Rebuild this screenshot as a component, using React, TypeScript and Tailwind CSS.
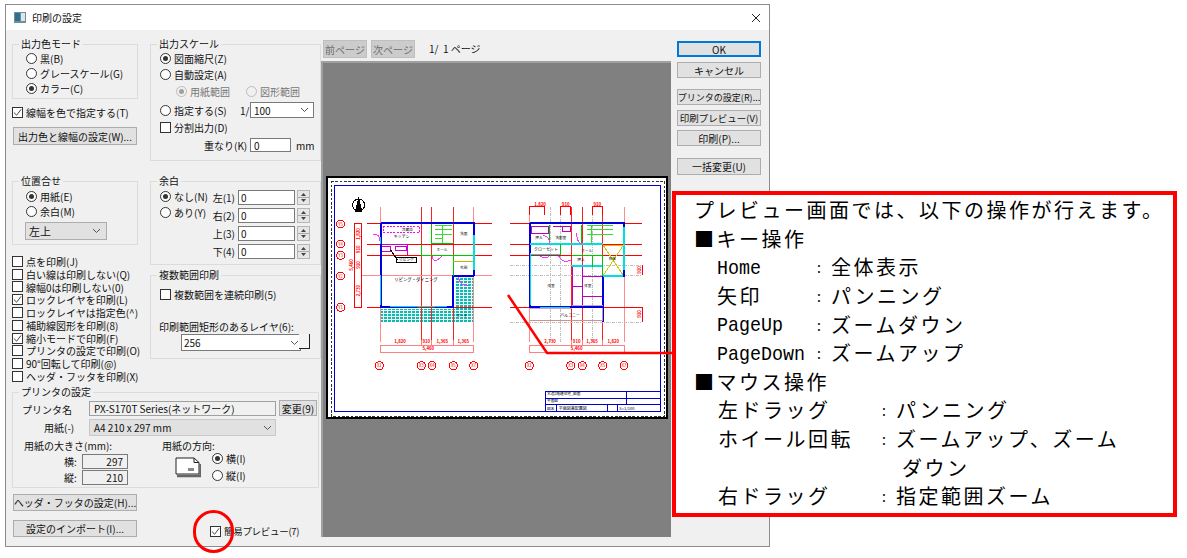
import { ReactNode } from "react";

const Radio = ({ on, off }: { on?: boolean; off?: boolean }) => (
  <span
    className={`flex h-[11px] w-[11px] shrink-0 items-center justify-center rounded-full border ${off ? "border-[#bcbcbc] bg-[#f0f0f0]" : "border-[#333333] bg-white"}`}
  >
    {on && <span className={`h-[5px] w-[5px] rounded-full ${off ? "bg-[#a0a0a0]" : "bg-[#333333]"}`} />}
  </span>
);

const Check = ({ on }: { on?: boolean }) => (
  <span className="flex h-[11px] w-[11px] shrink-0 items-center justify-center border border-[#333333] bg-white">
    {on && (
      <svg width="9" height="9" viewBox="0 0 10 10">
        <path d="M1 5 L4 8 L9 1.5" fill="none" stroke="#444444" strokeWidth="1.1" />
      </svg>
    )}
  </span>
);

const RadioRow = ({ on, off, children, className = "" }: { on?: boolean; off?: boolean; children: ReactNode; className?: string }) => (
  <div className={`flex items-center gap-[3px] whitespace-nowrap ${off ? "text-[#777777]" : ""} ${className}`}>
    <Radio on={on} off={off} />
    <span>{children}</span>
  </div>
);

const CheckRow = ({ on, children, className = "" }: { on?: boolean; children: ReactNode; className?: string }) => (
  <div className={`flex items-center gap-[3px] whitespace-nowrap ${className}`}>
    <Check on={on} />
    <span>{children}</span>
  </div>
);

const Group = ({ title, className, children }: { title: string; className: string; children: ReactNode }) => (
  <div className={`relative border border-[#dcdcdc] ${className}`}>
    <span className="absolute -top-[7px] left-[6px] bg-[#f0f0f0] px-[2px] leading-[12px] whitespace-nowrap">{title}</span>
    {children}
  </div>
);

const Btn = ({ children, focus, className = "" }: { children: ReactNode; focus?: boolean; className?: string }) => (
  <div
    className={`flex items-center justify-center bg-[#e1e1e1] whitespace-nowrap ${focus ? "border-2 border-[#0078d7]" : "border border-[#adadad]"} ${className}`}
  >
    {children}
  </div>
);

const Chevron = () => (
  <svg width="9" height="6" viewBox="0 0 9 6" className="shrink-0">
    <path d="M1 1 L4.5 4.5 L8 1" fill="none" stroke="#555555" strokeWidth="1" />
  </svg>
);

const Spin = () => (
  <div className="ml-[2px] flex h-[15px] w-[13px] flex-col border border-[#b5b5b5] bg-[#e6e6e6]">
    <svg width="11" height="13" viewBox="0 0 11 13">
      <path d="M5.5 2 L8 5 H3 Z M3 8 H8 L5.5 11 Z" fill="#444444" />
      <path d="M0 6.5 H11" stroke="#aaaaaa" />
    </svg>
  </div>
);

const MarginRow = ({ label }: { label: string }) => (
  <div className="flex h-[18px] items-center justify-end">
    <span className="mr-[3px]">{label}</span>
    <div className="flex h-[15px] w-[57px] items-center border border-[#7a7a7a] bg-white pl-[2px]">0</div>
    <Spin />
  </div>
);

const Hatch = ({ x, y, w, h }: { x: number; y: number; w: number; h: number }) => (
  <rect x={x} y={y} width={w} height={h} fill="url(#hatch)" />
);

const Bubble = ({ x, y, t }: { x: number; y: number; t: string }) => (
  <g>
    <circle cx={x} cy={y} r="12" fill="white" stroke="#ff0000" strokeWidth="3" />
    <text x={x} y={y + 5} fontSize="13" textAnchor="middle" fill="#ff0000">{t}</text>
  </g>
);

const Dim = ({ x, y, t, rot }: { x: number; y: number; t: string; rot?: boolean }) => (
  <text
    x={x}
    y={y}
    fontSize="13"
    fontWeight="700"
    textAnchor="middle"
    fill="#ff0000"
    transform={rot ? `rotate(-90 ${x} ${y})` : undefined}
  >
    {t}
  </text>
);

const Room = ({ x, y, t, size = 13 }: { x: number; y: number; t: string; size?: number }) => (
  <text x={x} y={y} fontSize={size} textAnchor="middle" fill="#000000">{t}</text>
);

const polyline = (d: string, color: string, w = 3, dash?: string) => (
  <path d={d} fill="none" stroke={color} strokeWidth={w} strokeDasharray={dash} />
);

// the drawing is plotted in 3x units of the screen so it stays easy to read off
const Plan = () => (
  <svg width="342" height="243" viewBox="18 18 1026 729" shapeRendering="crispEdges" className="block bg-white">
    <defs>
      <pattern id="hatch" width="12" height="9" patternUnits="userSpaceOnUse">
        <rect width="12" height="9" fill="#12b8b0" />
        <path d="M0 8 H12 M11 0 V9" stroke="#e8fbfa" strokeWidth="3" />
      </pattern>
    </defs>
    <rect x="20" y="20" width="1022" height="725" fill="none" stroke="#000000" strokeWidth="6" />
    <rect x="33" y="33" width="1000" height="706" fill="none" stroke="#333333" strokeWidth="3" strokeDasharray="8 5" />
    <rect x="44" y="46" width="978" height="679" fill="none" stroke="#0000cc" strokeWidth="3" />

    {/* north mark */}
    <circle cx="116" cy="105" r="18" fill="white" stroke="#000000" strokeWidth="3" />
    <path d="M116 78 L127 125 H105 Z" fill="#000000" />

    {/* left floor */}
    <Hatch x={180} y={416} w={282} h={41} />
    <Hatch x={404} y={320} w={58} h={96} />
    {[180, 304, 335, 400, 460].map((x) => (
      <path key={x} d={`M${x} 110 V515`} stroke={x === 180 || x === 460 ? "#ff8c8c" : "#ff2020"} strokeWidth="3" />
    ))}
    {[160, 223, 256, 412].map((y) => (
      <path key={y} d={`M140 ${y} H515`} stroke="#ff0000" strokeWidth="3" />
    ))}
    <path d="M124 316 H515" stroke="#ff8c8c" strokeWidth="3" />
    {polyline("M104 160 H124 V412 H104 Z M104 285 V412", "#ff0000", 3)}
    {polyline("M180 525 H460 M180 525 V547 H460 V525 M304 510 V525 M335 510 V525 M400 510 V525", "#ff8080", 3)}
    {polyline("M182 160 H462 V318 M182 160 V412 H290 M345 412 H400 V318 H462", "#0000dd", 6)}
    {polyline("M182 200 V222 M182 315 V405 M210 410 H380 M462 195 V300", "#00e0e0", 4)}
    {polyline("M304 225 V256 H460 M335 165 V220 H400 M400 256 V318", "#00c800", 3)}
    {polyline("M345 165 H395 M345 178 H395 M345 192 H395 M368 165 V220 M345 205 H368", "#33dd33", 3)}
    {polyline("M190 168 H298 V188 H190 Z", "#ff00ff", 3, "6 4")}
    {polyline("M186 222 H262 V256 M186 228 H212 V244 H186 M226 228 H258 V242 H226 Z", "#cc00cc", 3)}
    {polyline("M160 195 Q180 190 180 212 M336 258 Q340 284 366 258 M415 322 Q420 348 445 348", "#ff33ff", 3)}
    {polyline("M400 274 H460", "#bbbb00", 3)}
    <rect x="230" y="262" width="58" height="14" fill="white" stroke="#000000" strokeWidth="3" />
    {polyline("M212 240 L232 270", "#000000", 3)}
    <Room x={245} y={204} t="キッチン" size={12} />
    <Room x={262} y={182} t="冷蔵庫" size={11} />
    <Room x={259} y={273} t="リビング" size={11} />
    <Room x={288} y={332} t="リビング・ダイニング" size={13} />
    <Room x={366} y={244} t="ホール" size={11} />
    <Room x={431} y={194} t="洗面" size={11} />
    <Room x={431} y={298} t="玄関" size={11} />
    <Room x={426} y={440} t="ポーチ" size={11} />
    <Dim x={240} y={520} t="1,820" />
    <Dim x={319} y={520} t="910" />
    <Dim x={367} y={520} t="1,365" />
    <Dim x={430} y={520} t="1,365" />
    <Dim x={325} y={541} t="5,460" />
    <Dim x={119} y={192} t="1,820" rot />
    <Dim x={119} y={238} t="910" rot />
    <Dim x={119} y={285} t="910" rot />
    <Dim x={119} y={362} t="2,730" rot />
    <Dim x={100} y={285} t="5,460" rot />

    {/* right floor */}
    {[691, 722, 817].map((x) => (
      <path key={x} d={`M${x} 110 V515`} stroke="#c0c0c0" strokeWidth="3" strokeDasharray="10 3 2 3" />
    ))}
    {[628, 755, 787, 848, 913].map((x) => (
      <path key={x} d={`M${x} 110 V515`} stroke={x === 628 || x === 913 ? "#ff8c8c" : "#ff2020"} strokeWidth="3" />
    ))}
    {[160, 223, 256].map((y) => (
      <path key={y} d={`M570 ${y} H965`} stroke="#ff0000" strokeWidth="3" />
    ))}
    <path d="M570 412 H965" stroke="#ff0000" strokeWidth="3" />
    <path d="M570 287 H965 M570 316 H965 M570 456 H965" stroke="#c0c0c0" strokeWidth="3" strokeDasharray="10 3 2 3" />
    {polyline("M628 136 V108 H672 M722 136 V108 H752 M817 136 V108 H848 M672 108 V136 M752 108 V136 M848 108 V136", "#ff0000", 3)}
    {polyline("M628 525 H913 M628 525 V547 H913 V525 M755 510 V525 M787 510 V525 M848 510 V525", "#ff8080", 3)}
    {polyline("M968 285 V316 M968 410 V456", "#ff0000", 3)}
    {polyline("M630 160 H913 V318 H848 V412 H755 M630 160 V412 H755 M848 412 V456", "#0000dd", 6)}
    {polyline("M630 222 H848 M630 254 H722 M755 288 H848 M850 318 H910 M632 250 V405 M912 170 V300 M660 412 H750", "#00e0e0", 4)}
    {polyline("M755 256 H848 V318 M785 165 V222 M816 256 V290 M722 222 V256 M688 165 V222", "#00c800", 3)}
    {polyline("M800 165 H880 M800 178 H880 M800 192 H880 M815 165 V222", "#33dd33", 3)}
    {polyline("M634 168 H686 V190 H634 Z M700 168 H752 V184 H726 V168 M756 292 V405 M756 350 H787 M787 292 V405 H846 M787 320 H846 M787 380 H846 M756 405 H787", "#bb00bb", 3)}
    {polyline("M670 196 Q690 200 688 222 M716 258 Q730 282 752 270 M660 258 Q676 270 688 258 M770 190 Q770 216 785 222", "#ff33ff", 3)}
    {polyline("M850 226 L910 316 M910 226 L850 316 M850 226 H910", "#cccc00", 3)}
    {polyline("M630 414 H755 M755 405 H848", "#c8a8c8", 3)}
    {polyline("M630 452 H848 V415", "#d09090", 4)}
    <Room x={657} y={208} t="押入" size={11} />
    <Room x={722} y={208} t="洗面室" size={11} />
    <Room x={678} y={243} t="クローゼット" size={12} />
    <Room x={800} y={245} t="ホール" size={11} />
    <Room x={783} y={274} t="押入" size={11} />
    <Room x={877} y={271} t="吹抜" size={11} />
    <Room x={693} y={351} t="洋室" size={11} />
    <Room x={803} y={351} t="洋室" size={11} />
    <Room x={750} y={440} t="バルコニー" size={12} />
    <Dim x={660} y={108} t="1,820" />
    <Dim x={737} y={108} t="910" />
    <Dim x={832} y={108} t="910" />
    <Dim x={690} y={520} t="2,730" />
    <Dim x={770} y={520} t="910" />
    <Dim x={816} y={520} t="1,365" />
    <Dim x={880} y={520} t="1,820" />
    <Dim x={770} y={541} t="5,460" />
    <Dim x={964} y={300} t="910" rot />
    <Dim x={964} y={432} t="910" rot />

    {[
      [62, 162, "Y5"],
      [62, 222, "Y4"],
      [62, 256, "Y3"],
      [62, 318, "Y2"],
      [62, 412, "Y1"],
      [178, 587, "X1"],
      [304, 587, "X3"],
      [336, 587, "X4"],
      [400, 587, "X5"],
      [461, 587, "X7"],
      [628, 587, "X1"],
      [752, 587, "X3"],
      [787, 587, "X4"],
      [848, 587, "X5"],
      [912, 587, "X7"],
    ].map(([x, y, t]) => (
      <Bubble key={`${x}-${y}`} x={x as number} y={y as number} t={t as string} />
    ))}

    {/* title block */}
    {polyline("M677 725 V665 H1021 M677 685 H1021 M677 704 H1021 M919 665 V704 M710 704 V725 M862 704 V725 M892 704 V725", "#0000cc", 3)}
    <text x="681" y="675" fontSize="11">木造2階建住宅_図面</text>
    <text x="681" y="697" fontSize="11">平面図</text>
    <text x="681" y="719" fontSize="11">図名</text>
    <text x="716" y="719" fontSize="12">平面図兼配置図</text>
    <text x="898" y="719" fontSize="12">S=1/100</text>
  </svg>
);

const KeyRow = ({ k, v, latin }: { k: string; v: string; latin?: boolean }) => (
  <div className="flex h-[28.6px] items-center whitespace-nowrap pl-[23px]">
    <span className="w-[100px]">
      {latin ? (
        <span className="inline-block origin-left scale-x-[0.873] font-['Liberation_Mono'] text-[21px] tracking-normal">{k}</span>
      ) : (
        k
      )}
    </span>
    <span className="w-[14px] text-[14px]">:</span>
    <span>{v}</span>
  </div>
);

const MouseRow = ({ k, v, indent = "" }: { k: string; v: string; indent?: string }) => (
  <div className="flex h-[28.6px] items-center whitespace-nowrap pl-[24px]">
    <span className="w-[164px]">{k}</span>
    <span className={`w-[14px] text-[14px] ${k || !indent ? "" : "invisible"}`}>:</span>
    <span className={indent}>{v}</span>
  </div>
);

export default function App() {
  return (
    <div className="relative h-[558px] w-[1187px] overflow-hidden bg-white font-['Noto_Sans_CJK_JP','Liberation_Sans',sans-serif] text-[10px] leading-[13px] text-[#111111]">
      {/* dialog */}
      <div className="ml-[5px] mt-[4px] flex h-[543px] w-[765px] flex-col border border-[#8c8c8c] bg-[#f0f0f0]">
        <div className="flex h-[25px] shrink-0 items-center bg-white pl-[8px]">
          <svg width="12" height="11" viewBox="0 0 12 11" className="mr-[6px]">
            <rect width="12" height="11" fill="#6f8ea0" />
            <rect x="1" y="1" width="5" height="8" fill="#2f6f8f" />
            <rect x="7" y="1" width="4" height="8" fill="#dfe6e6" />
          </svg>
          <span>印刷の設定</span>
          <svg width="10" height="10" viewBox="0 0 10 10" className="ml-auto mr-[8px]">
            <path d="M1 1 L9 9 M9 1 L1 9" stroke="#222222" strokeWidth="1" />
          </svg>
        </div>

        <div className="flex min-h-0 flex-1">
          {/* settings */}
          <div className="ml-[6px] flex w-[310px] shrink-0 flex-col pt-[14px]">
            <div className="flex h-[348px] shrink-0">
              <div className="w-[138px] shrink-0">
                <Group title="出力色モード" className="h-[55px] w-[126px] pl-[13px] pt-[6px]">
                  <RadioRow className="h-[15px]">黒(B)</RadioRow>
                  <RadioRow className="h-[15px]">グレースケール(G)</RadioRow>
                  <RadioRow on className="h-[15px]">カラー(C)</RadioRow>
                </Group>
                <CheckRow on className="mt-[7px] h-[13px]">線幅を色で指定する(T)</CheckRow>
                <Btn className="ml-[1px] mt-[8px] h-[18px] w-[124px]">出力色と線幅の設定(W)...</Btn>
                <Group title="位置合せ" className="mt-[36px] h-[64px] w-[126px] pl-[13px] pt-[7px]">
                  <RadioRow on className="h-[15px]">用紙(E)</RadioRow>
                  <RadioRow className="h-[15px]">余白(M)</RadioRow>
                  <div className="-ml-[1px] mt-[3px] flex h-[18px] w-[82px] items-center justify-between border border-[#adadad] bg-[#e1e1e1] pl-[3px] pr-[5px]">
                    <span className="text-[11px]">左上</span>
                    <Chevron />
                  </div>
                </Group>
                <div className="mt-[10px] flex flex-col">
                  <CheckRow className="h-[12.8px]">点を印刷(J)</CheckRow>
                  <CheckRow className="h-[12.8px]">白い線は印刷しない(Q)</CheckRow>
                  <CheckRow className="h-[12.8px]">線幅0は印刷しない(0)</CheckRow>
                  <CheckRow on className="h-[12.8px]">ロックレイヤを印刷(L)</CheckRow>
                  <CheckRow className="h-[12.8px]">ロックレイヤは指定色(^)</CheckRow>
                  <CheckRow className="h-[12.8px]">補助線図形を印刷(8)</CheckRow>
                  <CheckRow on className="h-[12.8px]">縮小モードで印刷(F)</CheckRow>
                  <CheckRow className="h-[12.8px]">プリンタの設定で印刷(O)</CheckRow>
                  <CheckRow className="h-[12.8px]">90°回転して印刷(@)</CheckRow>
                  <CheckRow className="h-[12.8px]">ヘッダ・フッタを印刷(X)</CheckRow>
                </div>
              </div>

              <div className="w-[171px] shrink-0">
                <Group title="出力スケール" className="h-[117px] w-full pl-[9px] pt-[5px]">
                  <RadioRow on className="h-[16px]">図面縮尺(Z)</RadioRow>
                  <RadioRow className="h-[16px]">自動設定(A)</RadioRow>
                  <div className="flex h-[18px] items-center pl-[16px]">
                    <RadioRow on off className="w-[70px]">用紙範囲</RadioRow>
                    <RadioRow off>図形範囲</RadioRow>
                  </div>
                  <div className="flex h-[20px] items-center">
                    <RadioRow className="w-[80px]">指定する(S)</RadioRow>
                    <span className="w-[10px]">1/</span>
                    <div className="flex h-[16px] w-[64px] items-center justify-between border border-[#7a7a7a] bg-white pl-[3px] pr-[4px]">
                      <span>100</span>
                      <Chevron />
                    </div>
                  </div>
                  <CheckRow className="h-[14px]">分割出力(D)</CheckRow>
                  <div className="mt-[4px] flex h-[14px] items-center whitespace-nowrap pl-[44px]">
                    <span className="w-[46px]">重なり(K)</span>
                    <div className="flex h-[14px] w-[41px] items-center border border-[#7a7a7a] bg-white pl-[3px]">0</div>
                    <span className="ml-[5px]">mm</span>
                  </div>
                </Group>
                <Group title="余白" className="mt-[20px] flex h-[84px] w-full pl-[9px] pt-[6px]">
                  <div className="w-[48px]">
                    <RadioRow on className="h-[16px]">なし(N)</RadioRow>
                    <RadioRow className="h-[16px]">あり(Y)</RadioRow>
                  </div>
                  <div className="flex w-[102px] flex-col">
                    <MarginRow label="左(1)" />
                    <MarginRow label="右(2)" />
                    <MarginRow label="上(3)" />
                    <MarginRow label="下(4)" />
                  </div>
                </Group>
                <Group title="複数範囲印刷" className="mt-[10px] h-[84px] w-full pl-[9px] pt-[12px]">
                  <CheckRow className="h-[13px]">複数範囲を連続印刷(5)</CheckRow>
                  <div className="mt-[19px] -ml-[1px] h-[14px] whitespace-nowrap">印刷範囲矩形のあるレイヤ(6):</div>
                  <div className="ml-[21px] flex">
                    <div className="flex h-[17px] w-[120px] items-center justify-between border border-[#7a7a7a] bg-white pl-[2px] pr-[1px]">
                      <span>256</span>
                      <Chevron />
                    </div>
                    <div className="-ml-[2px] h-[15px] w-[11px] border-b border-r border-[#222222] bg-[#f4f4f4]" />
                  </div>
                </Group>
              </div>
            </div>

            <Group title="プリンタの設定" className="h-[96px] w-[307px]">
              <div className="flex h-[23px] items-end pl-[9px]">
                <span className="w-[67px]">プリンタ名</span>
                <div className="flex h-[15px] w-[187px] items-center border border-[#a0a0a0] bg-[#f0f0f0] pl-[4px]">PX-S170T Series(ネットワーク)</div>
                <Btn className="ml-[3px] h-[16px] w-[38px]">変更(9)</Btn>
              </div>
              <div className="mt-[3px] flex h-[17px] items-center pl-[31px]">
                <span className="w-[45px]">用紙(-)</span>
                <div className="flex h-[17px] w-[187px] items-center justify-between border border-[#c8c8c8] bg-[#e1e1e1] pl-[4px] pr-[3px]">
                  <span>A4 210 x 297 mm</span>
                  <Chevron />
                </div>
              </div>
              <div className="mt-[3px] flex pl-[11px]">
                <div className="w-[138px]">
                  <div className="h-[14px]">用紙の大きさ(mm):</div>
                  <div className="flex h-[16px] items-center pl-[40px]">
                    <span className="w-[18px]">横:</span>
                    <div className="h-[15px] w-[46px] border border-[#7a7a7a] pr-[4px] text-right leading-[13px]">297</div>
                  </div>
                  <div className="flex h-[16px] items-center pl-[40px]">
                    <span className="w-[18px]">縦:</span>
                    <div className="h-[15px] w-[46px] border border-[#7a7a7a] pr-[4px] text-right leading-[13px]">210</div>
                  </div>
                </div>
                <div>
                  <div className="h-[14px]">用紙の方向:</div>
                  <div className="flex items-start pl-[13px]">
                    <svg width="26" height="21" viewBox="0 0 26 21" className="mt-[4px]">
                      <path d="M1 1 H19 L24 5.5 V17 H1 Z" fill="white" stroke="#222222" />
                      <path d="M19 1 V5.5 H24" fill="none" stroke="#222222" />
                      <path d="M2 19 H25.5 V7" fill="none" stroke="#666666" strokeWidth="2.5" />
                      <rect x="13" y="11" width="6" height="3" fill="#888888" />
                    </svg>
                    <div className="-mt-[3px] ml-[11px]">
                      <RadioRow on className="h-[17px]">横(I)</RadioRow>
                      <RadioRow className="h-[17px]">縦(I)</RadioRow>
                    </div>
                  </div>
                </div>
              </div>
            </Group>

            <div className="flex items-start">
              <div className="ml-[1px] w-[197px] shrink-0">
                <Btn className="mt-[6px] h-[17px] w-[124px]">ヘッダ・フッタの設定(H)...</Btn>
                <Btn className="mt-[9px] h-[17px] w-[124px]">設定のインポート(I)...</Btn>
              </div>
              <CheckRow on className="mt-[37px] h-[13px] text-[9.5px] tracking-[-0.3px]">簡易プレビュー(7)</CheckRow>
            </div>
          </div>

          {/* preview */}
          <div className="ml-[-1px] flex w-[350px] shrink-0 flex-col pt-[10px]">
            <div className="flex h-[21px] items-start pl-[2px]">
              <div className="flex h-[18px] w-[44px] items-center justify-center border border-[#bfbfbf] bg-[#cccccc] text-[#6d6d6d]">前ページ</div>
              <div className="ml-[4px] flex h-[18px] w-[44px] items-center justify-center border border-[#bfbfbf] bg-[#cccccc] text-[#6d6d6d]">次ページ</div>
              <span className="ml-[14px] mt-[2px] whitespace-pre">1/  1 ページ</span>
            </div>
            <div className="flex h-[476px] items-center justify-center border-l-2 border-t-2 border-[#a0a0a0] bg-[#808080] pb-[5px]">
              <Plan />
            </div>
          </div>

          {/* buttons */}
          <div className="ml-[6px] flex w-[84px] flex-col pt-[11px]">
            <Btn focus className="h-[16px]">OK</Btn>
            <Btn className="mt-[5px] h-[16px]">キャンセル</Btn>
            <Btn className="mt-[11px] h-[16px] text-[9px]">プリンタの設定(R)...</Btn>
            <Btn className="mt-[5px] h-[16px] text-[9.5px]">印刷プレビュー(V)</Btn>
            <Btn className="mt-[4px] h-[16px]">印刷(P)...</Btn>
            <Btn className="mt-[12px] h-[17px]">一括変更(U)</Btn>
          </div>
        </div>
      </div>

      {/* callout leader */}
      <svg width="1187" height="558" className="pointer-events-none absolute left-0 top-0">
        <path d="M508 295 L547 353 H674" fill="none" stroke="#ff0000" strokeWidth="2.5" />
      </svg>

      {/* highlight on the simple preview checkbox */}
      <div className="absolute left-[193px] top-[510px] h-[43px] w-[41px] rounded-full border-[3px] border-[#ff0000]" />

      {/* callout */}
      <div className="absolute left-[672px] top-[191px] h-[326px] w-[505px] border-4 border-[#ff0000] bg-white pl-[18px] pt-[1px] text-[20px] leading-[28px] tracking-[2.5px] text-black">
        <div className="flex h-[28.6px] items-center whitespace-nowrap">プレビュー画面では、以下の操作が行えます。</div>
        <div className="flex h-[28.6px] items-center whitespace-nowrap">■キー操作</div>
        <KeyRow k="Home" v="全体表示" latin />
        <KeyRow k="矢印" v="パンニング" />
        <KeyRow k="PageUp" v="ズームダウン" latin />
        <KeyRow k="PageDown" v="ズームアップ" latin />
        <div className="flex h-[28.6px] items-center whitespace-nowrap">■マウス操作</div>
        <MouseRow k="左ドラッグ" v="パンニング" />
        <MouseRow k="ホイール回転" v="ズームアップ、ズーム" />
        <MouseRow k="" v="ダウン" indent="pl-[6px]" />
        <MouseRow k="右ドラッグ" v="指定範囲ズーム" />
      </div>
    </div>
  );
}
